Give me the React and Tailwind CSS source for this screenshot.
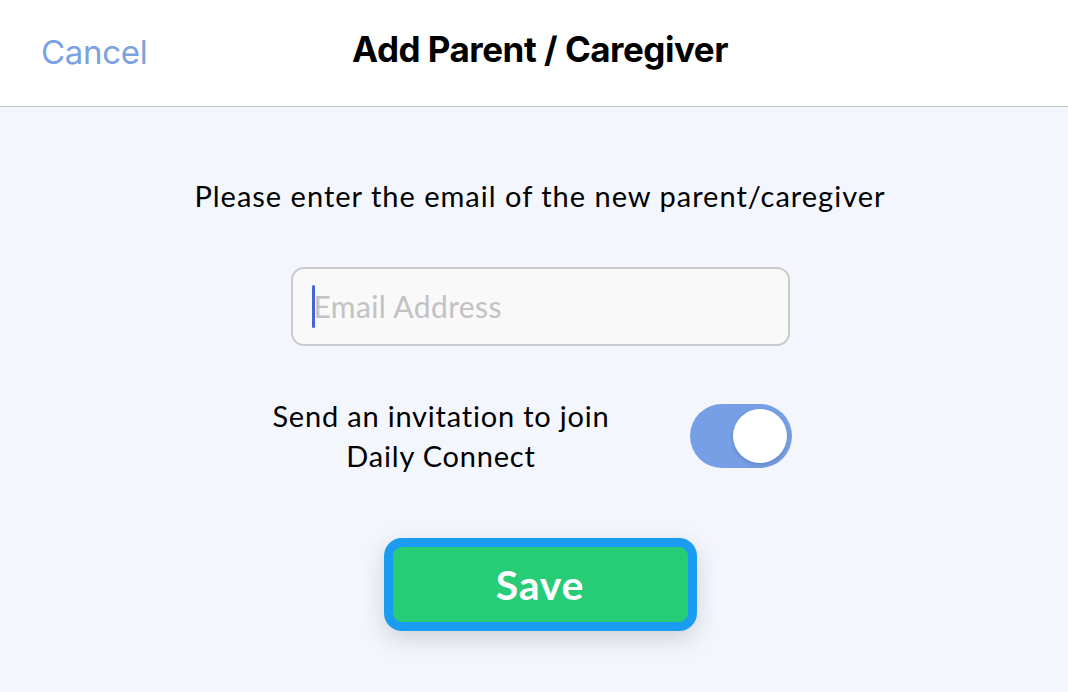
export default function App() {
  return (
    <div className="w-[1068px] h-[692px] bg-[#f3f6fd] flex flex-col overflow-hidden">
      <div className="h-[107px] bg-white border-b border-[#c4c4c8] flex items-center relative shrink-0">
        <div className="absolute left-[41px] top-[28px] text-[33px] text-[#7ba2e0] font-['Inter',sans-serif] tracking-[-0.3px]">Cancel</div>
        <div className="w-full text-center text-[35px] font-bold text-black font-['Inter',sans-serif] tracking-[-0.5px] -mt-[7px] pl-[12px]">Add Parent / Caregiver</div>
      </div>
      <div className="flex flex-col items-center font-['Lato',sans-serif] pl-[12px]">
        <div className="mt-[73px] text-[29px] text-black tracking-[1px] leading-[32px]">Please enter the email of the new parent/caregiver</div>
        <div className="mt-[55px] w-[499px] h-[79px] rounded-[13px] border-2 border-[#cacacd] bg-[#f9f9f9] flex items-center pl-[19px]">
          <div className="w-[3px] h-[43px] bg-[#4466dd] rounded-full"></div>
          <div className="text-[30px] text-[#c2c2c4] tracking-[0.4px] -ml-[1px]">Email Address</div>
        </div>
        <div className="mt-[50px] flex items-center gap-[80px] -ml-[16px]">
          <div className="text-[29px] text-black text-center leading-[40px] tracking-[0.8px]">Send an invitation to join<br />Daily Connect</div>
          <div className="w-[102px] h-[64px] rounded-full bg-[#779fe6] flex items-center justify-end pr-[5px]">
            <div className="w-[54px] h-[54px] rounded-full bg-white shadow-[0_2px_4px_rgba(0,0,0,0.15)]"></div>
          </div>
        </div>
        <div className="mt-[62px] w-[313px] h-[93px] rounded-[18px] border-[9px] border-[#1a9cf1] bg-[#27cc77] flex items-center justify-center shadow-[0_8px_24px_rgba(0,0,0,0.15)]">
          <div className="text-[41px] font-bold text-white tracking-[0.8px]">Save</div>
        </div>
      </div>
    </div>
  );
}
